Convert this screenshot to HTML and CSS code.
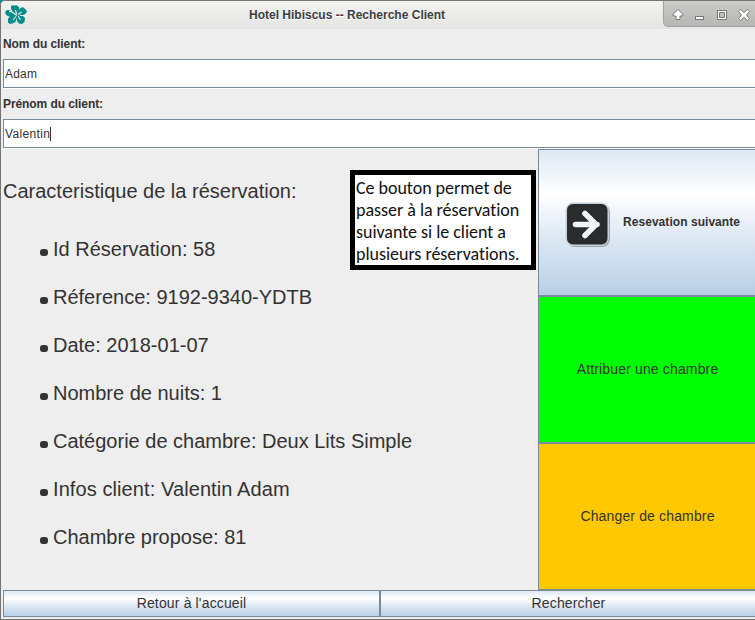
FILE: index.html
```
<!DOCTYPE html>
<html lang="fr">
<head>
<meta charset="utf-8">
<title>Hotel Hibiscus -- Recherche Client</title>
<link rel="stylesheet" href="styles.css">
</head>
<body>
<div class="window">
  <header class="titlebar">
    <svg class="logo" width="24" height="22" viewBox="0 0 24 22">
      <g fill="#078b8b">
        <path d="M6 2 L8 1 9 2 11 1 14 3 14.500 6 13 9 9 9 6 6Z"/>
        <path d="M14 6 L16 3.500 19 3.500 20 5 22 7 21 9.500 18 11 13 11Z"/>
        <path d="M12 12 L18 12 20 14 19.500 18 17 20 14 19.500 12 17Z"/>
        <path d="M8 12 L12 13 11 17 9 19 5 20 3 18.500 3 15 5 12Z"/>
        <path d="M9 12 L4 12.500 1 11 0 8 2 6 5 6 9 9Z"/>
        <path d="M9 8 L14 8 15 12 12 14 8 12Z"/>
      </g>
      <path d="M12 11.500 L4.500 6.500 M11.500 10 L10.500 6 M13 10.500 L16.500 8 M13 12 L15.500 16 M11 12.500 L8 16" stroke="#e9f5f4" stroke-width="1.100" fill="none"/>
      <path d="M5 4.500 L7 7 4 8" stroke="#e9f5f4" stroke-width="1" fill="none"/>
    </svg>
    <h1 class="title">Hotel Hibiscus -- Recherche Client</h1>
    <div class="controls">
      <svg width="92" height="26" viewBox="0 0 92 26" fill="#fff" stroke="#777" stroke-width="1">
        <path d="M14 9.500 L18.800 14 V16 H16 V19.500 H12 V16 H9.200 V14Z"/>
        <rect x="31.500" y="16.500" width="8" height="3"/>
        <path fill-rule="evenodd" d="M53.500 10.500 H62.500 V19.500 H53.500Z M55.500 12.500 H60.500 V17.500 H55.500Z"/>
        <path d="M76.500 9.500 L80 12.500 83.500 9.500 85.500 11.500 82.500 15 85.500 18.500 83.500 20.500 80 17.500 76.500 20.500 74.500 18.500 77.500 15 74.500 11.500Z"/>
      </svg>
    </div>
  </header>
  <main class="content">
    <label class="label" for="nom">Nom du client:</label>
    <div class="field" id="nom"><span>Adam</span></div>
    <label class="label" for="prenom">Prénom du client:</label>
    <div class="field" id="prenom"><span class="spaced">Valentin</span><i class="caret"></i></div>
    <div class="body">
      <section class="details">
        <p class="heading"><span>Caracteristique de la réservation:</span></p>
        <ul class="list">
          <li><span>Id Réservation: 58</span></li>
          <li><span>Réference: 9192-9340-YDTB</span></li>
          <li><span>Date: 2018-01-07</span></li>
          <li><span>Nombre de nuits: 1</span></li>
          <li><span>Catégorie de chambre: Deux Lits Simple</span></li>
          <li><span class="wide">Infos client: Valentin Adam</span></li>
          <li><span>Chambre propose: 81</span></li>
        </ul>
        <div class="note">Ce bouton permet de<br>passer à la réservation<br>suivante si le client a<br>plusieurs réservations.</div>
      </section>
      <aside class="actions">
        <button class="btn next">
          <svg width="48" height="48" viewBox="0 0 48 48">
            <rect x="3" y="3" width="43" height="43" rx="8" fill="#a5a5ae"/>
            <rect x="1.500" y="1.500" width="43.500" height="43.500" rx="8" fill="#c3d2dc"/>
            <rect x="3" y="3" width="40.500" height="40.500" rx="6" fill="#292b2c"/>
            <path d="M11.500 23.500 H33 M21 12.500 L32 23.500 21 34.500" fill="none" stroke="#f1f4f8" stroke-width="5.600" stroke-linecap="round" stroke-linejoin="round"/>
          </svg>
          <span>Resevation suivante</span>
        </button>
        <button class="btn assign">Attribuer une chambre</button>
        <button class="btn change">Changer de chambre</button>
      </aside>
    </div>
    <footer class="footer">
      <button class="btn">Retour à l'accueil</button>
      <button class="btn">Rechercher</button>
    </footer>
  </main>
</div>
</body>
</html>
```
FILE: styles.css
```
* { box-sizing: border-box; }
html { background: #078b8b; }
body {
  margin: 0;
  width: 755px;
  height: 620px;
  overflow: hidden;
  font-family: "Liberation Sans", Arial, sans-serif;
  color: #333;
}
.window {
  width: 760px;
  height: 620px;
  border: 1px solid #777475;
  border-radius: 5px 0 0 0;
  background: #eee;
  overflow: hidden;
}
.titlebar {
  height: 28px;
  display: flex;
  align-items: flex-start;
  background: linear-gradient(#f2f2f1, #e4e4e2);
}
.logo { margin: 3px 0 0 4px; flex: none; }
.title {
  margin: 0 0 0 220px;
  width: 415px;
  font-size: 12px;
  line-height: 28px;
  font-weight: bold;
  color: #3c3e40;
  text-shadow: 0 1px #fff;
  white-space: nowrap;
}
.controls {
  flex: none;
  width: 95px;
  height: 26px;
  margin-left: -1px;
  border: 1px solid #a2a2a0;
  border-top: 0;
  border-radius: 0 0 0 5px;
  background: linear-gradient(#cbcbca, #b6b6b4);
}
.controls svg { display: block; margin-top: -1px; }
.content {
  width: 754px;
  margin-left: 2px;
  display: flex;
  flex-direction: column;
}
.label { height: 30px; line-height: 30px; font-size: 12px; font-weight: bold; letter-spacing: -0.08px; }
.field {
  height: 29px;
  margin-bottom: 1px;
  padding-left: 1px;
  border: 1px solid #7a8a99;
  box-shadow: 0 1px #fff;
  background: #fff;
  display: flex;
  align-items: center;
  font-size: 12px;
}
#nom { letter-spacing: 0.2px; }
.spaced { letter-spacing: 0.35px; }
.caret { width: 1px; height: 14px; background: #333; }
.body { height: 441px; display: flex; }
.details { position: relative; width: 535px; font-size: 20px; }
.heading { margin: 30px 0 0; line-height: 24px; white-space: nowrap; }
.list { margin: 22px 0 0; padding: 0; list-style: none; }
.list li {
  height: 48px;
  display: flex;
  align-items: center;
  padding-left: 37px;
  white-space: nowrap;
}
.list li::before {
  content: "";
  width: 8px;
  height: 7px;
  margin: 6px 5px 0 0;
  border-radius: 3px;
  background: #333;
}
.wide { letter-spacing: 0.09px; }
.note {
  position: absolute;
  left: 347px;
  top: 21px;
  width: 186px;
  height: 100px;
  padding: 2px 0 0 1px;
  border: 5px solid #000;
  background: #fff;
  color: #111;
  font: 18px/22px Carlito, Lato, sans-serif;
  font-variant-ligatures: none;
  letter-spacing: -0.03px;
  white-space: nowrap;
}
.actions { width: 219px; display: flex; flex-direction: column; }
.btn {
  flex: 1;
  padding: 0 0 2px;
  border: 1px solid #7a8a99;
  background: linear-gradient(#dde8f3, #fff 30%, #dde8f3 60%, #b8cfe5);
  font: 14px "Liberation Sans", Arial, sans-serif;
  letter-spacing: 0.15px;
  color: #333;
}
.actions .btn { flex: none; height: 147px; }
.actions .next {
  display: flex;
  align-items: center;
  padding: 4px 0 0 25px;
  gap: 11px;
  font-size: 12px;
  font-weight: bold;
  letter-spacing: 0.05px;
}
.next span { margin-top: -6px; }
.next svg { flex: none; }
.assign { background: #0f0; }
.change { background: #ffc800; }
.footer { height: 27px; display: flex; }
```
